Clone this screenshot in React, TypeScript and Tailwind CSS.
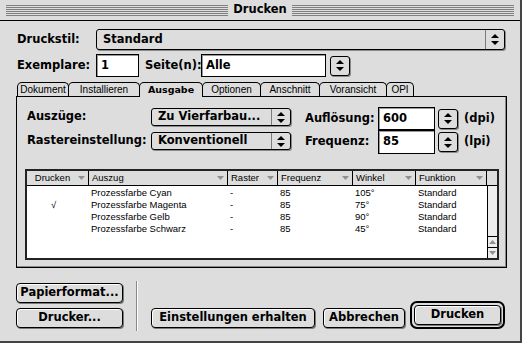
import type { ReactNode } from 'react'

const SYS = "font-['DejaVu_Sans',sans-serif] font-bold text-[11.5px] text-black"
const SMALL = "font-['Liberation_Sans',sans-serif] text-[9.5px] text-black"

function Stripes() {
  return (
    <div className="flex-1 flex flex-col gap-[1px]">
      {[0, 1, 2, 3, 4, 5].map(i => (
        <div key={i} className="h-[1px] bg-[#808080]" />
      ))}
    </div>
  )
}

function UpDown({ size = 8 }: { size?: number }) {
  return (
    <svg width={size} height={size + 3} viewBox="0 0 8 11">
      <path d="M4 0 L8 4 L0 4 Z" fill="#000" />
      <path d="M0 7 L8 7 L4 11 Z" fill="#000" />
    </svg>
  )
}

function Popup({ label, w, h }: { label: string; w: string; h: string }) {
  return (
    <div className={`${w} ${h} flex items-stretch border border-black rounded-[3px] bg-[#dddddd] shadow-[1px_1px_0_#8a8a8a]`}>
      <div className={`flex-1 flex items-center pl-[6px] ${SYS}`}>{label}</div>
      <div className="w-[19px] border-l border-[#7a7a7a] flex items-center justify-center">
        <UpDown />
      </div>
    </div>
  )
}

function Stepper() {
  return (
    <div className="w-[20px] h-[20px] flex items-center justify-center border border-black rounded-[3px] bg-[#dddddd] shadow-[1px_1px_0_#8a8a8a]">
      <UpDown />
    </div>
  )
}

function Field({ value, w, h = 'h-[23px]' }: { value: string; w: string; h?: string }) {
  return (
    <div className={`${w} ${h} bg-white border border-black shadow-[inset_1px_1px_0_#999] flex items-center pl-[4px] ${SYS}`}>
      {value}
    </div>
  )
}

function Button({ children, w }: { children: ReactNode; w: string }) {
  return (
    <div className={`${w} h-[20px] flex items-center justify-center border border-black rounded-[4px] bg-[#dddddd] shadow-[1px_1px_0_#7a7a7a,inset_1px_1px_0_#fff] ${SYS}`}>
      {children}
    </div>
  )
}

const TABS = [
  { label: 'Dokument', w: 'w-[52px]' },
  { label: 'Installieren', w: 'w-[72px]' },
  { label: 'Ausgabe', w: 'w-[64px]' },
  { label: 'Optionen', w: 'w-[59px]' },
  { label: 'Anschnitt', w: 'w-[60px]' },
  { label: 'Voransicht', w: 'w-[68px]' },
  { label: 'OPI', w: 'w-[28px]' },
]

function SortArrow() {
  return (
    <svg width="7" height="4" viewBox="0 0 7 4" className="ml-auto mr-[3px]">
      <path d="M0 0 L7 0 L3.5 4 Z" fill="#909090" />
    </svg>
  )
}

const COLS = [
  { label: 'Drucken', w: 'w-[62px]', right: true },
  { label: 'Auszug', w: 'w-[139px]' },
  { label: 'Raster', w: 'w-[50px]' },
  { label: 'Frequenz', w: 'w-[75px]' },
  { label: 'Winkel', w: 'w-[63px]' },
  { label: 'Funktion', w: 'w-[71px]' },
]

const ROWS = [
  { check: false, name: 'Prozessfarbe Cyan', angle: '105°' },
  { check: true, name: 'Prozessfarbe Magenta', angle: '75°' },
  { check: false, name: 'Prozessfarbe Gelb', angle: '90°' },
  { check: false, name: 'Prozessfarbe Schwarz', angle: '45°' },
]

export default function App() {
  return (
    <div className="w-[522px] h-[343px] bg-[#dddddd] border-r-2 border-b-2 border-[#444] overflow-hidden flex flex-col">
      {/* title bar */}
      <div className="h-[21px] shrink-0 flex items-center gap-[5px] px-[6px] border-b border-black">
        <Stripes />
        <span className={`${SYS} leading-none`}>Drucken</span>
        <Stripes />
      </div>

      {/* Druckstil */}
      <div className="flex items-center pl-[17px] mt-[8px]">
        <span className={`${SYS} w-[79px]`}>Druckstil:</span>
        <Popup label="Standard" w="w-[409px]" h="h-[21px]" />
      </div>

      {/* Exemplare / Seiten */}
      <div className="flex items-center pl-[17px] mt-[4px]">
        <span className={`${SYS} w-[79px]`}>Exemplare:</span>
        <Field value="1" w="w-[43px]" />
        <span className={`${SYS} ml-[6px] w-[56px]`}>Seite(n):</span>
        <Field value="Alle" w="w-[125px]" />
        <div className="ml-[4px]">
          <Stepper />
        </div>
      </div>

      {/* tabs */}
      <div className="flex items-end pl-[17px] mt-[5px] h-[14px]">
        {TABS.map(t => (
          <div
            key={t.label}
            className={`${t.w} h-[14px] flex items-center justify-center border-t border-l border-r border-black rounded-t-[5px] -mr-[1px] ${
              t.label === 'Ausgabe'
                ? "font-['DejaVu_Sans',sans-serif] font-bold text-[9.5px] bg-[#dddddd] relative z-10 h-[15px] -mb-[1px]"
                : "font-['Liberation_Sans',sans-serif] text-[10px] text-black"
            }`}
          >
            {t.label}
          </div>
        ))}
      </div>

      {/* panel */}
      <div className="ml-[16px] w-[491px] h-[172px] border border-black shadow-[inset_-1px_-1px_0_#8a8a8a] flex flex-col px-[8px]">
        <div className="flex mt-[10px]">
          <div className="flex flex-col gap-[6px] pt-[1px]">
            <div className="flex items-center h-[18px]">
              <span className={`${SYS} w-[126px] pl-[2px]`}>Auszüge:</span>
              <Popup label="Zu Vierfarbau..." w="w-[140px]" h="h-[18px]" />
            </div>
            <div className="flex items-center h-[18px]">
              <span className={`${SYS} w-[126px] pl-[2px]`}>Rastereinstellung:</span>
              <Popup label="Konventionell" w="w-[140px]" h="h-[18px]" />
            </div>
          </div>
          <div className="flex flex-col ml-[14px]">
            <div className="flex items-center">
              <span className={`${SYS} w-[73px]`}>Auflösung:</span>
              <Field value="600" w="w-[57px]" />
              <div className="ml-[3px]"><Stepper /></div>
              <span className={`${SYS} ml-[6px]`}>(dpi)</span>
            </div>
            <div className="flex items-center">
              <span className={`${SYS} w-[73px]`}>Frequenz:</span>
              <Field value="85" w="w-[57px]" h="h-[24px]" />
              <div className="ml-[3px]"><Stepper /></div>
              <span className={`${SYS} ml-[6px]`}>(lpi)</span>
            </div>
          </div>
        </div>

        {/* table */}
        <div className="mt-[15px] w-[474px] h-[91px] border-2 border-[#222] bg-white flex flex-col">
          <div className="h-[15px] shrink-0 flex bg-[#dddddd] border-b border-black">
            {COLS.map(c => (
              <div key={c.label} className={`${c.w} flex items-center border-r border-black ${SMALL}`}>
                <span className={c.right ? 'ml-auto' : 'pl-[3px]'}>{c.label}</span>
                <SortArrow />
              </div>
            ))}
            <div className="flex-1" />
          </div>
          <div className="flex-1 flex">
            <div className="flex-1 flex flex-col pt-[1px]">
              {ROWS.map(r => (
                <div key={r.name} className={`flex h-[12px] items-center ${SMALL}`}>
                  <div className="w-[62px] pl-[24px]">{r.check ? '√' : ''}</div>
                  <div className="w-[139px] pl-[2px]">{r.name}</div>
                  <div className="w-[50px] pl-[2px]">-</div>
                  <div className="w-[75px] pl-[2px]">85</div>
                  <div className="w-[63px] pl-[2px]">{r.angle}</div>
                  <div className="w-[71px] pl-[2px]">Standard</div>
                </div>
              ))}
            </div>
            <div className="w-[12px] bg-[#eeeeee] border-l border-black flex flex-col justify-end">
              <div className="h-[11px] border-t border-black flex items-center justify-center">
                <svg width="7" height="4" viewBox="0 0 7 4"><path d="M3.5 0 L7 4 L0 4 Z" fill="#909090" /></svg>
              </div>
              <div className="h-[11px] border-t border-black flex items-center justify-center">
                <svg width="7" height="4" viewBox="0 0 7 4"><path d="M0 0 L7 0 L3.5 4 Z" fill="#909090" /></svg>
              </div>
            </div>
          </div>
        </div>
      </div>

      {/* bottom buttons */}
      <div className="flex mt-[13px] pl-[16px]">
        <div className="flex flex-col gap-[5px] pt-[2px]">
          <Button w="w-[107px]">Papierformat...</Button>
          <Button w="w-[107px]">Drucker...</Button>
        </div>
        <div className="w-[2px] h-[50px] mx-[13px] border-l border-[#888] border-r border-r-white" />
        <div className="flex items-end gap-[8px] pb-[3px]">
          <Button w="w-[164px]">Einstellungen erhalten</Button>
          <Button w="w-[82px]">Abbrechen</Button>
        </div>
        <div className="ml-[5px] mt-[20px] h-[28px] border-[2px] border-black rounded-[7px] p-[2px] flex items-center bg-[#dddddd]">
          <Button w="w-[87px]">Drucken</Button>
        </div>
      </div>
    </div>
  )
}
